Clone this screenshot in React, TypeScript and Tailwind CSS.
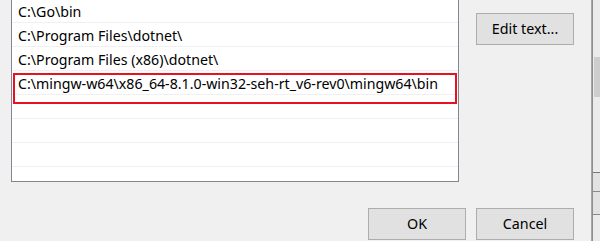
import React from "react";

const rows = [
  "C:\\Go\\bin",
  "C:\\Program Files\\dotnet\\",
  "C:\\Program Files (x86)\\dotnet\\",
  "C:\\mingw-w64\\x86_64-8.1.0-win32-seh-rt_v6-rev0\\mingw64\\bin",
  "",
  "",
  "",
];

function Btn({ label }: { label: string }) {
  return (
    <div className="w-[98px] h-[32px] shrink-0 flex items-center justify-center bg-[#e1e1e1] border border-[#adadad] text-[14.3px] text-black">
      {label}
    </div>
  );
}

export default function App() {
  return (
    <div
      className="w-[600px] h-[241px] bg-[#f0f0f0] flex overflow-hidden"
      style={{ fontFamily: '"Noto Sans", "Open Sans", sans-serif' }}
    >
      <div className="w-[591px] shrink-0 flex flex-col">
        <div className="flex items-start">
          <div className="relative ml-[11px] mt-[-2px] w-[448px] h-[184px] bg-white border border-[#828790] flex flex-col shrink-0">
            {rows.map((r, i) => (
              <div
                key={i}
                className="h-[24px] shrink-0 border-b border-[#f0f0f0] pl-[6px] pt-[3px] text-[14.2px] leading-[20px] text-black whitespace-nowrap"
              >
                {r}
              </div>
            ))}
            <div className="absolute left-[1px] top-[74px] w-[444px] h-[31px] border-2 border-[#e81123]" />
          </div>
          <div className="ml-[17px] mt-[13px]">
            <Btn label="Edit text..." />
          </div>
        </div>
        <div className="mt-[26px] flex justify-end gap-[10px] pr-[17px]">
          <Btn label="OK" />
          <Btn label="Cancel" />
        </div>
      </div>
      <div className="w-[9px] shrink-0 border-l border-[#a6a6a6] flex">
        <div className="w-px bg-[#8e8e8e]" />
        <div className="flex-1 flex flex-col bg-[#ebebeb]">
          <div className="h-[57px]" />
          <div className="h-[40px] ml-px bg-[#cdcdcd]" />
          <div className="h-[75px]" />
          <div className="h-px bg-[#6f7a86]" />
          <div className="h-[18px] bg-[#e2e2e2]" />
          <div className="h-px bg-[#8a8a8a]" />
          <div className="h-[22px] bg-[#e2e2e2]" />
          <div className="h-px bg-[#8a8a8a]" />
          <div className="flex-1" />
        </div>
      </div>
    </div>
  );
}
